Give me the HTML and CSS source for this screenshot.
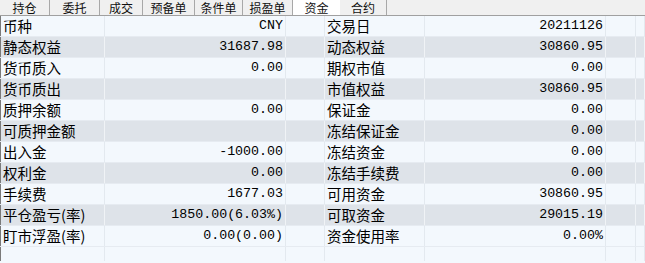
FILE: index.html
```html
<!DOCTYPE html>
<html lang="zh-CN">
<head>
    <meta charset="UTF-8">
    <title>资金</title>
    <link rel="stylesheet" href="styles.css">
</head>
<body>
    <div class="tabs">
        <div class="tab" style="width:50px">持仓</div>
        <div class="tab" style="width:50px">委托</div>
        <div class="tab" style="width:43px">成交</div>
        <div class="tab" style="width:52px">预备单</div>
        <div class="tab" style="width:48px">条件单</div>
        <div class="tab" style="width:50px">损盈单</div>
        <div class="tab active" style="width:47px">资金</div>
        <div class="tab" style="width:47px">合约</div>
    </div>

    <table class="funds">
        <colgroup>
            <col class="c-label1">
            <col class="c-value1">
            <col class="c-gap1">
            <col class="c-label2">
            <col class="c-value2">
            <col class="c-gap2">
            <col>
        </colgroup>
        <tbody id="rows"></tbody>
    </table>

    <script>
        const rows = [
            ['币种', 'CNY', '交易日', '20211126'],
            ['静态权益', '31687.98', '动态权益', '30860.95'],
            ['货币质入', '0.00', '期权市值', '0.00'],
            ['货币质出', '', '市值权益', '30860.95'],
            ['质押余额', '0.00', '保证金', '0.00'],
            ['可质押金额', '', '冻结保证金', '0.00'],
            ['出入金', '-1000.00', '冻结资金', '0.00'],
            ['权利金', '0.00', '冻结手续费', '0.00'],
            ['手续费', '1677.03', '可用资金', '30860.95'],
            ['平仓盈亏(率)', '1850.00(6.03%)', '可取资金', '29015.19'],
            ['盯市浮盈(率)', '0.00(0.00)', '资金使用率', '0.00%']
        ];

        const body = document.getElementById('rows');
        rows.forEach((r, i) => {
            const tr = document.createElement('tr');
            tr.className = i % 2 ? 'alt' : '';
            tr.innerHTML =
                `<td class="label">${r[0]}</td>` +
                `<td class="num">${r[1]}</td><td></td>` +
                `<td class="label">${r[2]}</td>` +
                `<td class="num">${r[3]}</td><td></td><td></td>`;
            body.appendChild(tr);
        });
        // empty filler row below the data
        const filler = document.createElement('tr');
        filler.className = 'filler';
        filler.innerHTML = '<td></td><td></td><td></td><td></td><td></td><td></td><td></td>';
        body.appendChild(filler);
    </script>
</body>
</html>
```

FILE: styles.css
```css
html, body {
    margin: 0;
    padding: 0;
    background: #f3f8fd;
    overflow: hidden;
}
body {
    width: 645px;
    height: 263px;
    font-family: "Noto Sans CJK SC", sans-serif;
    color: #000;
}
.tabs {
    display: flex;
    height: 15px;
    background: #f0f0f0;
    border-bottom: 1px solid #a0a0a0;
}
.tab {
    box-sizing: border-box;
    height: 15px;
    line-height: 15px;
    font-size: 12px;
    text-align: center;
    color: #111;
    border-right: 1px solid #a8a8a8;
}
.tab.active {
    background: #fff;
    border-right: none;
}
.funds {
    width: 645px;
    table-layout: fixed;
    border-collapse: collapse;
    border-left: 1px solid #7a7a7a;
}
.c-label1 { width: 104px; }
.c-value1 { width: 181px; }
.c-gap1 { width: 39px; }
.c-label2 { width: 100px; }
.c-value2 { width: 181px; }
.c-gap2 { width: 30px; }
.funds td {
    height: 20px;
    padding: 0 2px;
    border-right: 1px solid #e3e9ef;
    border-bottom: 1px solid #e6ebf1;
    white-space: nowrap;
    overflow: hidden;
    line-height: 20px;
}
.funds tr.alt td {
    background: #dee3e9;
    border-right-color: #f0f3f6;
}
.funds td.label {
    font-size: 14.5px;
}
.funds td.num {
    font-family: "Liberation Mono", monospace;
    font-size: 13.3px;
    text-align: right;
}
.funds tr.filler td {
    height: 14px;
    border-bottom: none;
}
```
